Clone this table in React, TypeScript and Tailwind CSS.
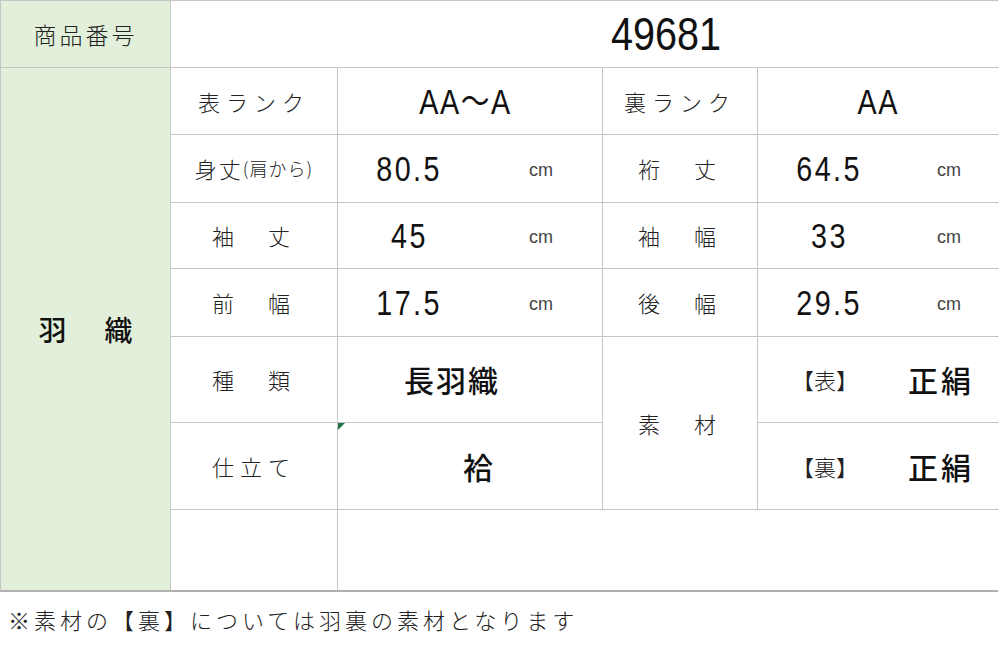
import type { ReactNode } from 'react'

const jp = "font-['Noto_Sans_CJK_JP',sans-serif]"
const num = "font-['Liberation_Sans','Noto_Sans_CJK_JP',sans-serif]"

function Label({ children, className = '' }: { children: ReactNode; className?: string }) {
  return (
    <div
      className={`flex items-center justify-center bg-white text-[22px] font-light tracking-[6px] text-[#222] ${jp} ${className}`}
    >
      {children}
    </div>
  )
}

function Measure({ value }: { value: string }) {
  return (
    <div className="flex items-center bg-white">
      <div className="w-[142px] text-center">
        <span className={`inline-block scale-x-[0.82] text-[35px] leading-none tracking-[3px] text-[#111] ${num}`}>
          {value}
        </span>
      </div>
      <div className={`flex-1 pt-[4px] text-center text-[18px] text-[#444] ${num}`}>cm</div>
    </div>
  )
}

function Fabric({ side }: { side: string }) {
  return (
    <div className={`flex items-center bg-white pl-[34px] ${jp}`}>
      <span className="w-[116px] text-[22px] font-light text-[#222]">【{side}】</span>
      <span className="text-[30px] font-medium tracking-[3px] text-[#111]">正絹</span>
    </div>
  )
}

export default function App() {
  return (
    <div className="h-[649px] w-[1000px] bg-white">
      <div className="grid w-[998px] grid-cols-[169px_166px_264px_154px_240px] grid-rows-[66px_66px_67px_65px_67px_85px_86px_80px] gap-px border-t border-l border-r-2 border-b-2 border-t-[#c6c6c6] border-l-[#c6c6c6] border-r-[#b0b0b0] border-b-[#b0b0b0] bg-[#c6c6c6]">
        {/* header */}
        <div className={`col-start-1 row-start-1 flex items-center justify-center bg-[#e2efda] text-[23px] font-light tracking-[3px] text-[#222] ${jp}`}>
          商品番号
        </div>
        <div className="col-span-4 col-start-2 row-start-1 flex items-center justify-center bg-white pl-[162px]">
          <span className={`inline-block scale-x-[0.86] text-[46px] leading-none text-[#111] ${num}`}>49681</span>
        </div>

        {/* category */}
        <div className={`col-start-1 row-span-7 row-start-2 flex items-center justify-center gap-[38px] bg-[#e2efda] text-[28px] font-medium text-[#111] ${jp}`}>
          <span>羽</span>
          <span>織</span>
        </div>

        {/* rank */}
        <Label className="col-start-2 row-start-2">表ランク</Label>
        <div className="col-start-3 row-start-2 flex items-center justify-center bg-white pr-[8px]">
          <span className={`inline-block scale-x-[0.82] text-[35px] leading-none tracking-[2px] text-[#111] ${num}`}>AA～A</span>
        </div>
        <Label className="col-start-4 row-start-2">裏ランク</Label>
        <div className="col-start-5 row-start-2 flex items-center justify-center bg-white">
          <span className={`inline-block scale-x-[0.82] text-[35px] leading-none tracking-[2px] text-[#111] ${num}`}>AA</span>
        </div>

        {/* sizes */}
        <Label className="col-start-2 row-start-3 !tracking-[2px]">
          身丈<span className="text-[18px] tracking-[1px]">(肩から)</span>
        </Label>
        <Measure value="80.5" />
        <Label className="col-start-4 row-start-3">裄　丈</Label>
        <Measure value="64.5" />

        <Label className="col-start-2 row-start-4">袖　丈</Label>
        <Measure value="45" />
        <Label className="col-start-4 row-start-4">袖　幅</Label>
        <Measure value="33" />

        <Label className="col-start-2 row-start-5">前　幅</Label>
        <Measure value="17.5" />
        <Label className="col-start-4 row-start-5">後　幅</Label>
        <Measure value="29.5" />

        {/* type / tailoring */}
        <Label className="col-start-2 row-start-6">種　類</Label>
        <div className={`col-start-3 row-start-6 flex items-center justify-center bg-white pr-[36px] text-[30px] font-medium tracking-[2px] text-[#111] ${jp}`}>
          長羽織
        </div>
        <Label className="col-start-4 row-span-2 row-start-6">素　材</Label>
        <div className="col-start-5 row-start-6 grid">
          <Fabric side="表" />
        </div>

        <Label className="col-start-2 row-start-7">仕立て</Label>
        <div className={`relative col-start-3 row-start-7 flex items-center justify-center bg-white pl-[16px] text-[30px] font-medium text-[#111] ${jp}`}>
          <span className="absolute top-0 left-0 h-0 w-0 border-t-[7px] border-r-[7px] border-t-[#217346] border-r-transparent" />
          袷
        </div>
        <div className="col-start-5 row-start-7 grid">
          <Fabric side="裏" />
        </div>

        {/* empty row */}
        <div className="col-start-2 row-start-8 bg-white" />
        <div className="col-span-3 col-start-3 row-start-8 bg-white" />
      </div>

      <p className={`mt-[12px] pl-[8px] text-[22px] font-light leading-[30px] tracking-[4px] text-[#222] ${jp}`}>
        ※素材の【裏】については羽裏の素材となります
      </p>
    </div>
  )
}
